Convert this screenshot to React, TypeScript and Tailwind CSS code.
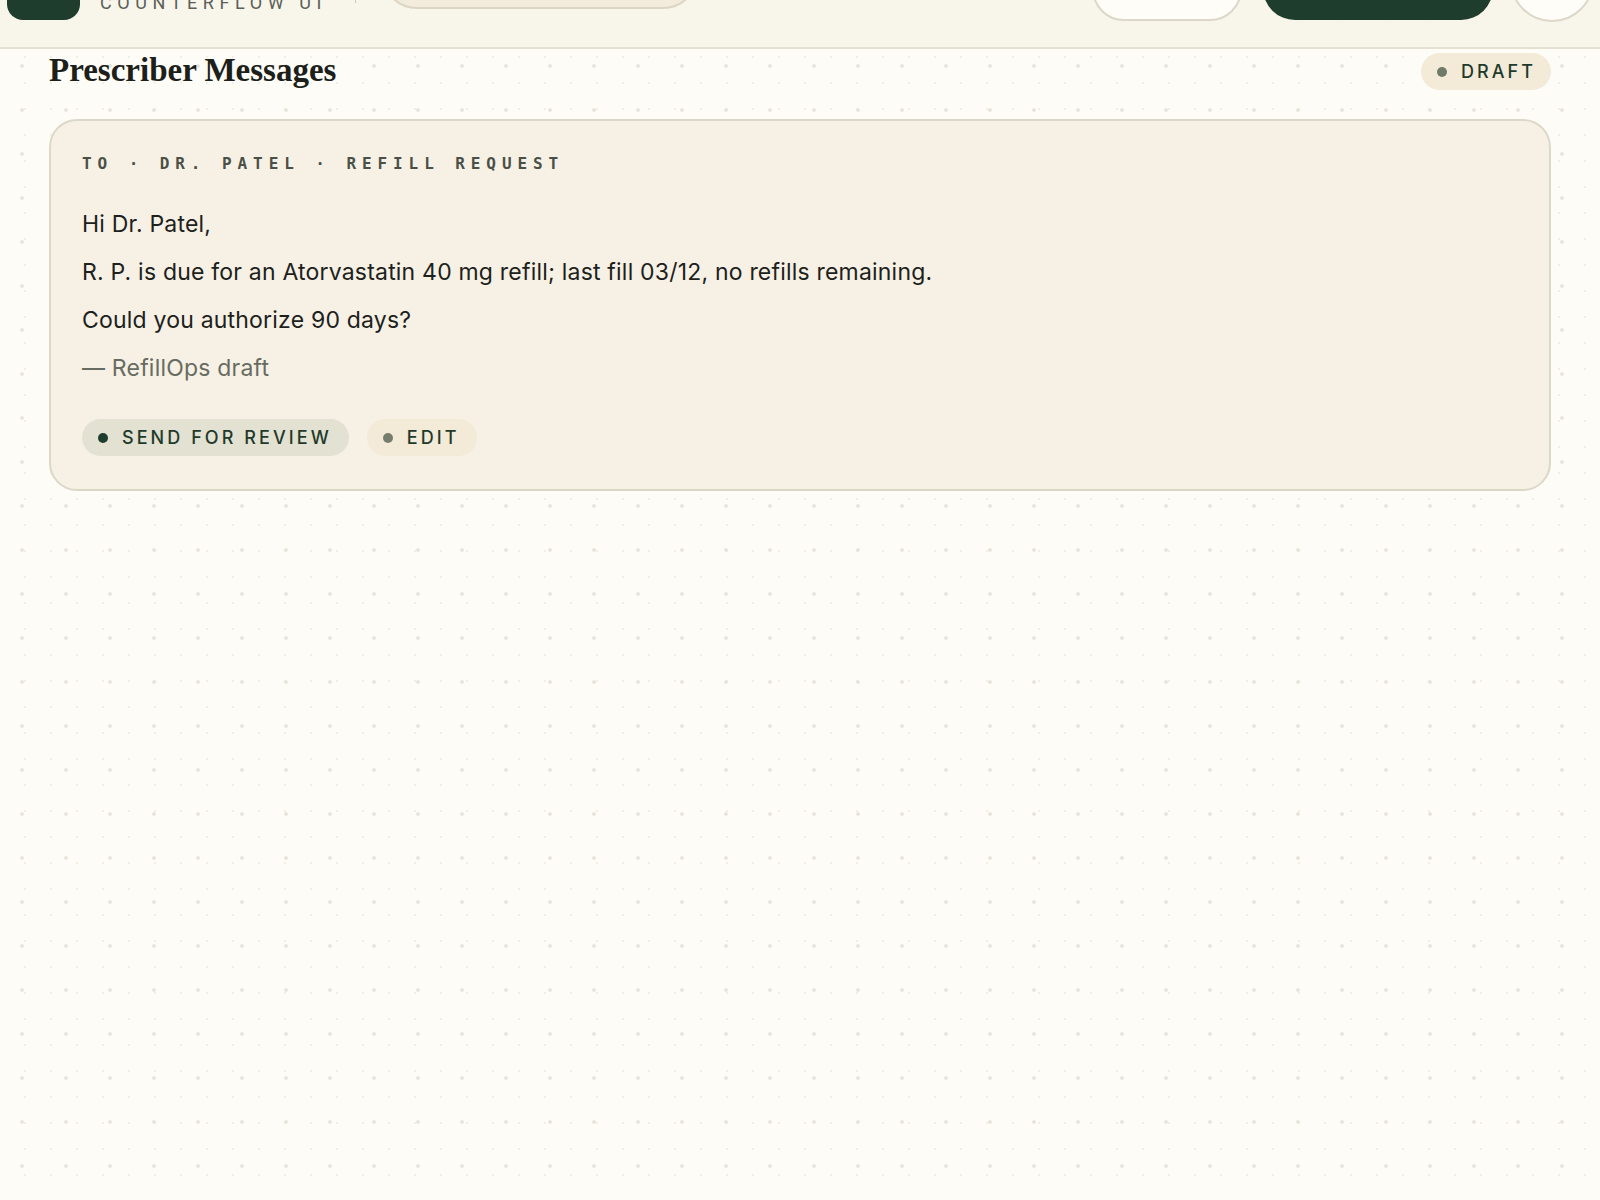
import React from "react";

const sans = "font-['Inter','Roboto',sans-serif]";

function Pill({
  label,
  dot,
  bg,
  className = "",
}: {
  label: string;
  dot: string;
  bg: string;
  className?: string;
}) {
  return (
    <span
      className={`inline-flex h-[37px] items-center gap-[14px] rounded-full pl-[16px] pr-[14px] ${bg} ${className}`}
    >
      <span className={`h-[10px] w-[10px] rounded-full ${dot}`} />
      <span className={`${sans} text-[18px] font-medium tracking-[0.17em] text-[#1f3a2a]`}>
        {label}
      </span>
    </span>
  );
}

export default function App() {
  return (
    <div className="min-h-[1200px] w-full bg-[#fefcf7] [background-image:radial-gradient(circle,#e9e6dc_1.6px,transparent_1.8px),radial-gradient(circle,#f2efe7_1.1px,transparent_1.3px)] [background-size:44px_44px,26px_26px] [background-position:0_0,12px_-8px]">
      {/* top bar */}
      <header className="flex h-[49px] items-start overflow-hidden border-b-2 border-[#e5e1d1] bg-[#f8f5ea]/95 pl-[7px]">
        <div className="-mt-[32px] h-[52px] w-[73px] shrink-0 rounded-[16px] bg-[#1f3d2c]" />
        <span className="ml-[20px] -mt-[8px] font-['Roboto',sans-serif] text-[18px] leading-[22px] tracking-[0.31em] text-[#5b6058]">
          COUNTERFLOW UI
        </span>
        <span className="ml-[28px] -mt-[27px] h-[30px] w-px bg-[#cdc8b8]" />
        <div className="-mt-[63px] ml-[25px] h-[72px] w-[318px] rounded-full border-2 border-[#dcd5c3] bg-[#f3ebdc]" />
        <div className="ml-auto flex items-start">
          <div className="-mt-[43px] flex h-[64px] w-[150px] items-end justify-center rounded-full border-2 border-[#dcd7c9] bg-[#fffdf8] pb-[20px]">
            <span className={`${sans} text-[14px] font-medium text-[#2a2f28]`}>Sync</span>
          </div>
          <div className="-mt-[44px] ml-[21px] h-[64px] w-[230px] rounded-full bg-[#1f3d2c]" />
          <div className="-mt-[62px] ml-[17px] mr-[6px] h-[84px] w-[84px] rounded-full border-2 border-[#dcd7c9] bg-[#fffdf8]" />
        </div>
      </header>

      <main className="px-[49px]">
        <div className="mt-[4px] flex items-center justify-between">
          <h1 className="mb-[3px] font-['Liberation_Serif',serif] text-[33px] font-bold leading-[33px] text-[#1c1f1a]">
            Prescriber Messages
          </h1>
          <Pill label="DRAFT" dot="bg-[#6f7b69]" bg="bg-[#f3ead8]" className="pr-[15px]" />
        </div>

        <section className="mt-[29px] rounded-[28px] border-2 border-[#dcd8c7] bg-[#f6f1e4] px-[31px] pb-[33px] pt-[33px]">
          <div className="font-['DejaVu_Sans_Mono',monospace] text-[16px] font-bold leading-[20px] tracking-[0.37em] text-[#4a5047]">
            TO · DR. PATEL · REFILL REQUEST
          </div>

          <div className={`mt-[34px] ${sans} text-[23px] leading-[32px] tracking-[0.2px] text-[#1d211c]`}>
            <p className="mb-[16px]">Hi Dr. Patel,</p>
            <p className="mb-[16px]">
              R. P. is due for an Atorvastatin 40 mg refill; last fill 03/12, no refills remaining.
            </p>
            <p className="mb-[16px]">Could you authorize 90 days?</p>
            <p className="text-[#676b62]">— RefillOps draft</p>
          </div>

          <div className="mt-[35px] flex items-center gap-[18px]">
            <Pill label="SEND FOR REVIEW" dot="bg-[#1f3d2c]" bg="bg-[#e3e1d2]" className="pr-[17px]" />
            <Pill label="EDIT" dot="bg-[#767d6f]" bg="bg-[#f3ead8]" className="pr-[17px]" />
          </div>
        </section>
      </main>
    </div>
  );
}
